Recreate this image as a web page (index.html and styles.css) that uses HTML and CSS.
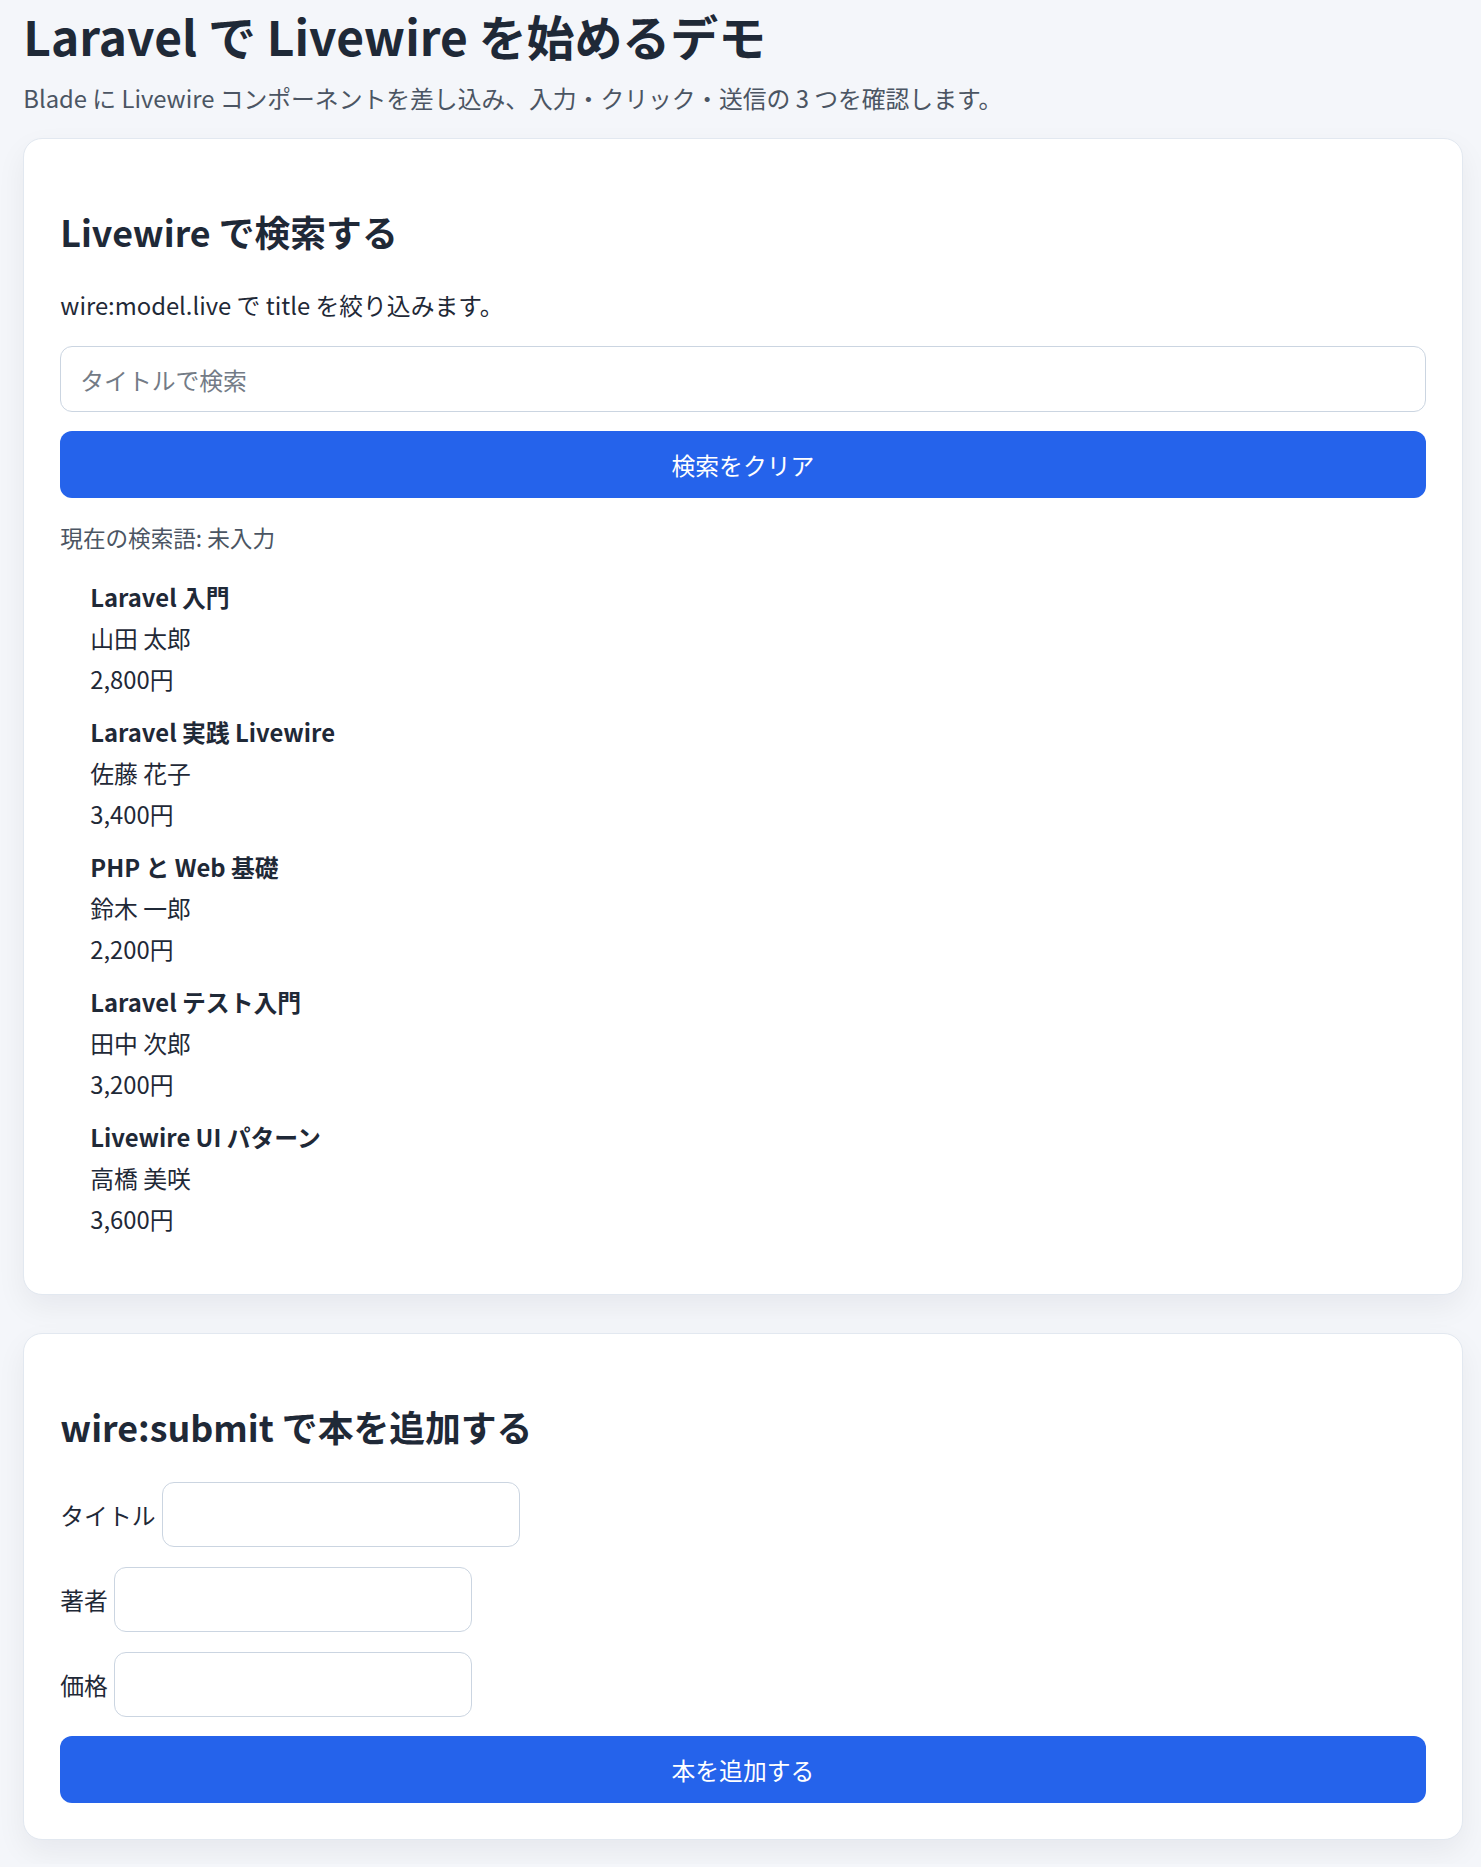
FILE: index.html
```html
<!DOCTYPE html>
<html lang="ja">
<head>
<meta charset="utf-8">
<title>Laravel で Livewire を始めるデモ</title>
<link rel="stylesheet" href="styles.css">
</head>
<body>
<main class="page">
  <h1 class="page-title">Laravel で Livewire を始めるデモ</h1>
  <p class="page-lead">Blade に Livewire コンポーネントを差し込み、入力・クリック・送信の 3 つを確認します。</p>

  <section class="card">
    <h2 class="card-title">Livewire で検索する</h2>
    <p class="card-desc">wire:model.live で title を絞り込みます。</p>
    <input class="text-input" type="text" placeholder="タイトルで検索">
    <button class="btn" type="button">検索をクリア</button>
    <p class="status">現在の検索語: 未入力</p>
    <ul class="book-list">
      <li class="book">
        <div class="book-title">Laravel 入門</div>
        <div>山田 太郎</div>
        <div>2,800円</div>
      </li>
      <li class="book">
        <div class="book-title">Laravel 実践 Livewire</div>
        <div>佐藤 花子</div>
        <div>3,400円</div>
      </li>
      <li class="book">
        <div class="book-title">PHP と Web 基礎</div>
        <div>鈴木 一郎</div>
        <div>2,200円</div>
      </li>
      <li class="book">
        <div class="book-title">Laravel テスト入門</div>
        <div>田中 次郎</div>
        <div>3,200円</div>
      </li>
      <li class="book">
        <div class="book-title">Livewire UI パターン</div>
        <div>高橋 美咲</div>
        <div>3,600円</div>
      </li>
    </ul>
  </section>

  <section class="card card-second">
    <h2 class="card-title">wire:submit で本を追加する</h2>
    <form class="add-form">
      <div class="form-row">
        <label class="form-label" for="f-title">タイトル</label>
        <input class="field" id="f-title" type="text">
      </div>
      <div class="form-row">
        <label class="form-label" for="f-author">著者</label>
        <input class="field" id="f-author" type="text">
      </div>
      <div class="form-row">
        <label class="form-label" for="f-price">価格</label>
        <input class="field" id="f-price" type="text">
      </div>
      <button class="btn btn-submit" type="submit">本を追加する</button>
    </form>
  </section>
</main>
</body>
</html>
```

FILE: styles.css
```css
* {
  box-sizing: border-box;
}

html, body {
  margin: 0;
  padding: 0;
}

body {
  background: #f4f6fa;
  font-family: "Noto Sans CJK JP", "Noto Sans", sans-serif;
  color: #1f2937;
}

.page {
  padding: 0 18.5px 24px 23.3px;
}

.page-title {
  margin: 0 0 9.5px;
  font-size: 47.9px;
  font-weight: 700;
  line-height: normal;
  color: #1f2937;
}

.page-lead {
  margin: 0 0 23px;
  font-size: 23.8px;
  line-height: normal;
  color: #4b5563;
}

.card {
  background: #ffffff;
  border: 1px solid #e2e8f0;
  border-radius: 19px;
  padding: 36px;
  box-shadow: 0 12px 30px rgba(15, 23, 42, 0.06);
}

.card-second {
  margin-top: 37.6px;
}

.card-title {
  margin: 30.5px 0 29.7px;
  font-size: 35.8px;
  font-weight: 700;
  line-height: normal;
  color: #1f2937;
}

.card-desc {
  margin: 0 0 24.4px;
  font-size: 23.8px;
  line-height: normal;
  color: #1f2937;
}

.text-input {
  display: block;
  width: 100%;
  height: 66px;
  padding: 0 19px;
  border: 1px solid #cbd5e1;
  border-radius: 12px;
  background: #fff;
  font-family: inherit;
  font-size: 23.8px;
  color: #1f2937;
  outline: none;
}

.text-input::placeholder,
.field::placeholder {
  color: #737b86;
}

.btn {
  display: block;
  width: 100%;
  height: 67px;
  margin-top: 19px;
  border: none;
  border-radius: 12px;
  background: #2563eb;
  color: #ffffff;
  font-family: inherit;
  font-size: 23.8px;
  font-weight: 400;
  cursor: pointer;
}

.status {
  margin: 23px 0 0;
  font-size: 22.6px;
  line-height: normal;
  color: #4b5563;
}

.book-list {
  list-style: none;
  margin: 21.5px 0 19.5px;
  padding: 0 0 0 30px;
}

.book {
  font-size: 23.8px;
  line-height: 41px;
  color: #1f2937;
  margin-bottom: 12px;
}

.book:last-child {
  margin-bottom: 0;
}

.book-title {
  font-weight: 700;
}

.add-form {
  display: flex;
  flex-direction: column;
  gap: 19.4px;
}

.form-row {
  display: flex;
  align-items: center;
  gap: 6.5px;
}

.form-label {
  font-size: 23.8px;
  color: #1f2937;
}

.field {
  width: 358px;
  height: 65.6px;
  padding: 0 19px;
  border: 1px solid #cbd5e1;
  border-radius: 12px;
  background: #fff;
  font-family: inherit;
  font-size: 23.8px;
  color: #1f2937;
  outline: none;
}

.btn-submit {
  margin-top: -0.7px;
  height: 66.7px;
}
```
